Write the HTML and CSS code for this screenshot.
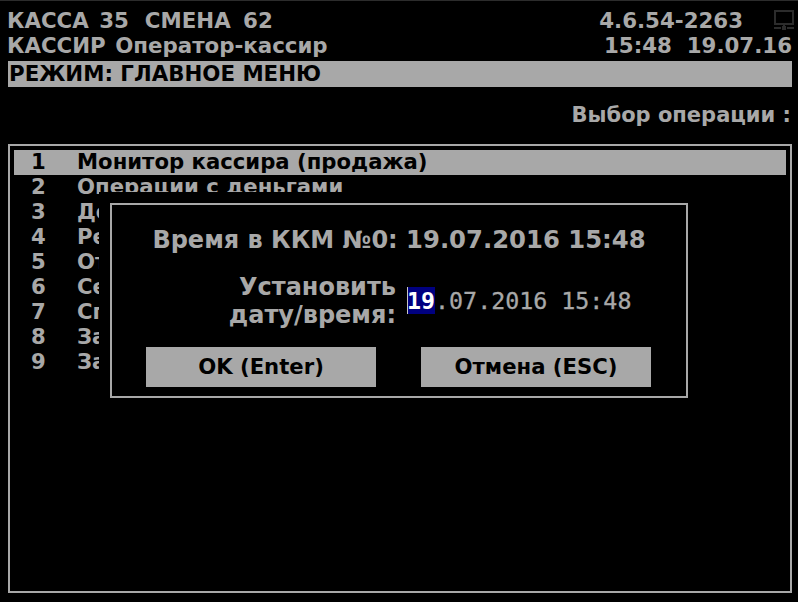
FILE: index.html
```html
<!DOCTYPE html>
<html>
<head>
<title>Касса</title>
<link rel="stylesheet" href="styles.css">
</head>
<body>
<div class="screen">
  <div class="header">
    <div class="header-row">
      <span class="kassa">КАССА 35</span>
      <span class="shift">СМЕНА 62</span>
      <span class="version">4.6.54-2263</span>
      <svg class="net-icon" width="20" height="20" viewBox="0 0 20 20">
        <path d="M1 1h18v13H1z" fill="none" stroke="#2c2c2c" stroke-width="2"/>
        <path d="M9 15h2v2H9zM0 17h7v2H0zM8 16h4v4H8zM13 17h7v2h-7z" fill="#2c2c2c"/>
      </svg>
    </div>
    <div class="header-row">
      <span class="cashier">КАССИР Оператор-кассир</span>
      <span class="clock">15:48  19.07.16</span>
    </div>
  </div>
  <div class="mode">РЕЖИМ: ГЛАВНОЕ МЕНЮ</div>
  <div class="prompt">Выбор операции :</div>
  <div class="menu">
    <div class="menu-item selected"><span class="num">1</span>Монитор кассира (продажа)</div>
    <div class="menu-item"><span class="num">2</span>Операции с деньгами</div>
    <div class="menu-item"><span class="num">3</span>Дополнительно</div>
    <div class="menu-item"><span class="num">4</span>Режим</div>
    <div class="menu-item"><span class="num">5</span>Отчёты</div>
    <div class="menu-item"><span class="num">6</span>Сервис</div>
    <div class="menu-item"><span class="num">7</span>Справка</div>
    <div class="menu-item"><span class="num">8</span>Закрыть</div>
    <div class="menu-item"><span class="num">9</span>Завершить</div>
  </div>
  <div class="dialog">
    <div class="dialog-title">Время в ККМ №0: <span class="dialog-now">19.07.2016 15:48</span></div>
    <div class="dialog-form">
      <div class="dialog-label">Установить<br>дату/время:</div>
      <div class="date-input"><span class="date-sel">19</span>.07.2016 15:48</div>
    </div>
    <div class="dialog-buttons">
      <div class="btn">OK (Enter)</div>
      <div class="btn">Отмена (ESC)</div>
    </div>
  </div>
</div>
</body>
</html>
```

FILE: styles.css
```css
html, body {
  margin: 0;
  padding: 0;
  background: #000;
}

.screen {
  position: relative;
  width: 798px;
  height: 602px;
  box-sizing: border-box;
  padding: 0 6px 9px 8px;
  display: flex;
  flex-direction: column;
  background: #000;
  border-top: 1px solid #2c2c2c;
  color: #a8a8a8;
  font-family: "DejaVu Sans", sans-serif;
  font-weight: bold;
  font-size: 21.33px;
  overflow: hidden;
}

.header {
  height: 60px;
  padding-top: 7px;
  box-sizing: border-box;
}

.header-row {
  display: flex;
  height: 25px;
  line-height: 25px;
}

.kassa {
  margin-left: -1px;
  word-spacing: 3px;
}

.shift {
  margin-left: 16px;
  word-spacing: 5px;
}

.cashier {
  margin-left: -1px;
  word-spacing: 2px;
}

.version {
  margin-left: auto;
}

.net-icon {
  margin: 2px -2px 0 31px;
}

.clock {
  margin-left: auto;
  white-space: pre;
}

.mode {
  height: 26px;
  line-height: 26px;
  padding-left: 1px;
  background: #a8a8a8;
  color: #000;
}

.prompt {
  height: 57px;
  line-height: 56px;
  padding-right: 1px;
  text-align: right;
  font-size: 21px;
}

.menu {
  flex: 1;
  border: 2px solid #a8a8a8;
  padding: 4px;
  font-size: 21.2px;
}

.menu-item {
  height: 25px;
  line-height: 24px;
}

.menu-item.selected {
  background: #a8a8a8;
  color: #000;
}

.num {
  display: inline-block;
  width: 46px;
  padding-left: 17px;
}

.dialog {
  position: absolute;
  left: 110px;
  top: 202px;
  width: 578px;
  height: 195px;
  box-sizing: border-box;
  border: 2px solid #a8a8a8;
  background: #000;
  box-shadow: 0 0 0 11px #000;
  padding: 20px 34px 0;
}

.dialog-title {
  height: 30px;
  line-height: 30px;
  text-align: center;
  font-size: 24px;
}

.dialog-now {
  font-size: 24.3px;
}

.dialog-form {
  display: flex;
  align-items: center;
  margin-top: 18px;
}

.dialog-label {
  width: 250px;
  text-align: right;
  font-size: 24px;
  line-height: 28px;
}

.date-input {
  margin-left: 11px;
  font-family: "DejaVu Sans Mono", monospace;
  font-weight: normal;
  font-size: 23.3px;
  line-height: 28px;
  white-space: pre;
  -webkit-text-stroke: 0.3px #a8a8a8;
}

.date-sel {
  background: #000080;
  box-shadow: inset 1px 0 0 #c8c8c8;
  color: #fff;
  font-weight: bold;
  -webkit-text-stroke: 0;
}

.dialog-buttons {
  display: flex;
  justify-content: space-between;
  margin-top: 18px;
  padding-right: 1px;
}

.btn {
  width: 230px;
  height: 40px;
  line-height: 40px;
  text-align: center;
  font-size: 21.2px;
  background: #a8a8a8;
  color: #000;
}
```
